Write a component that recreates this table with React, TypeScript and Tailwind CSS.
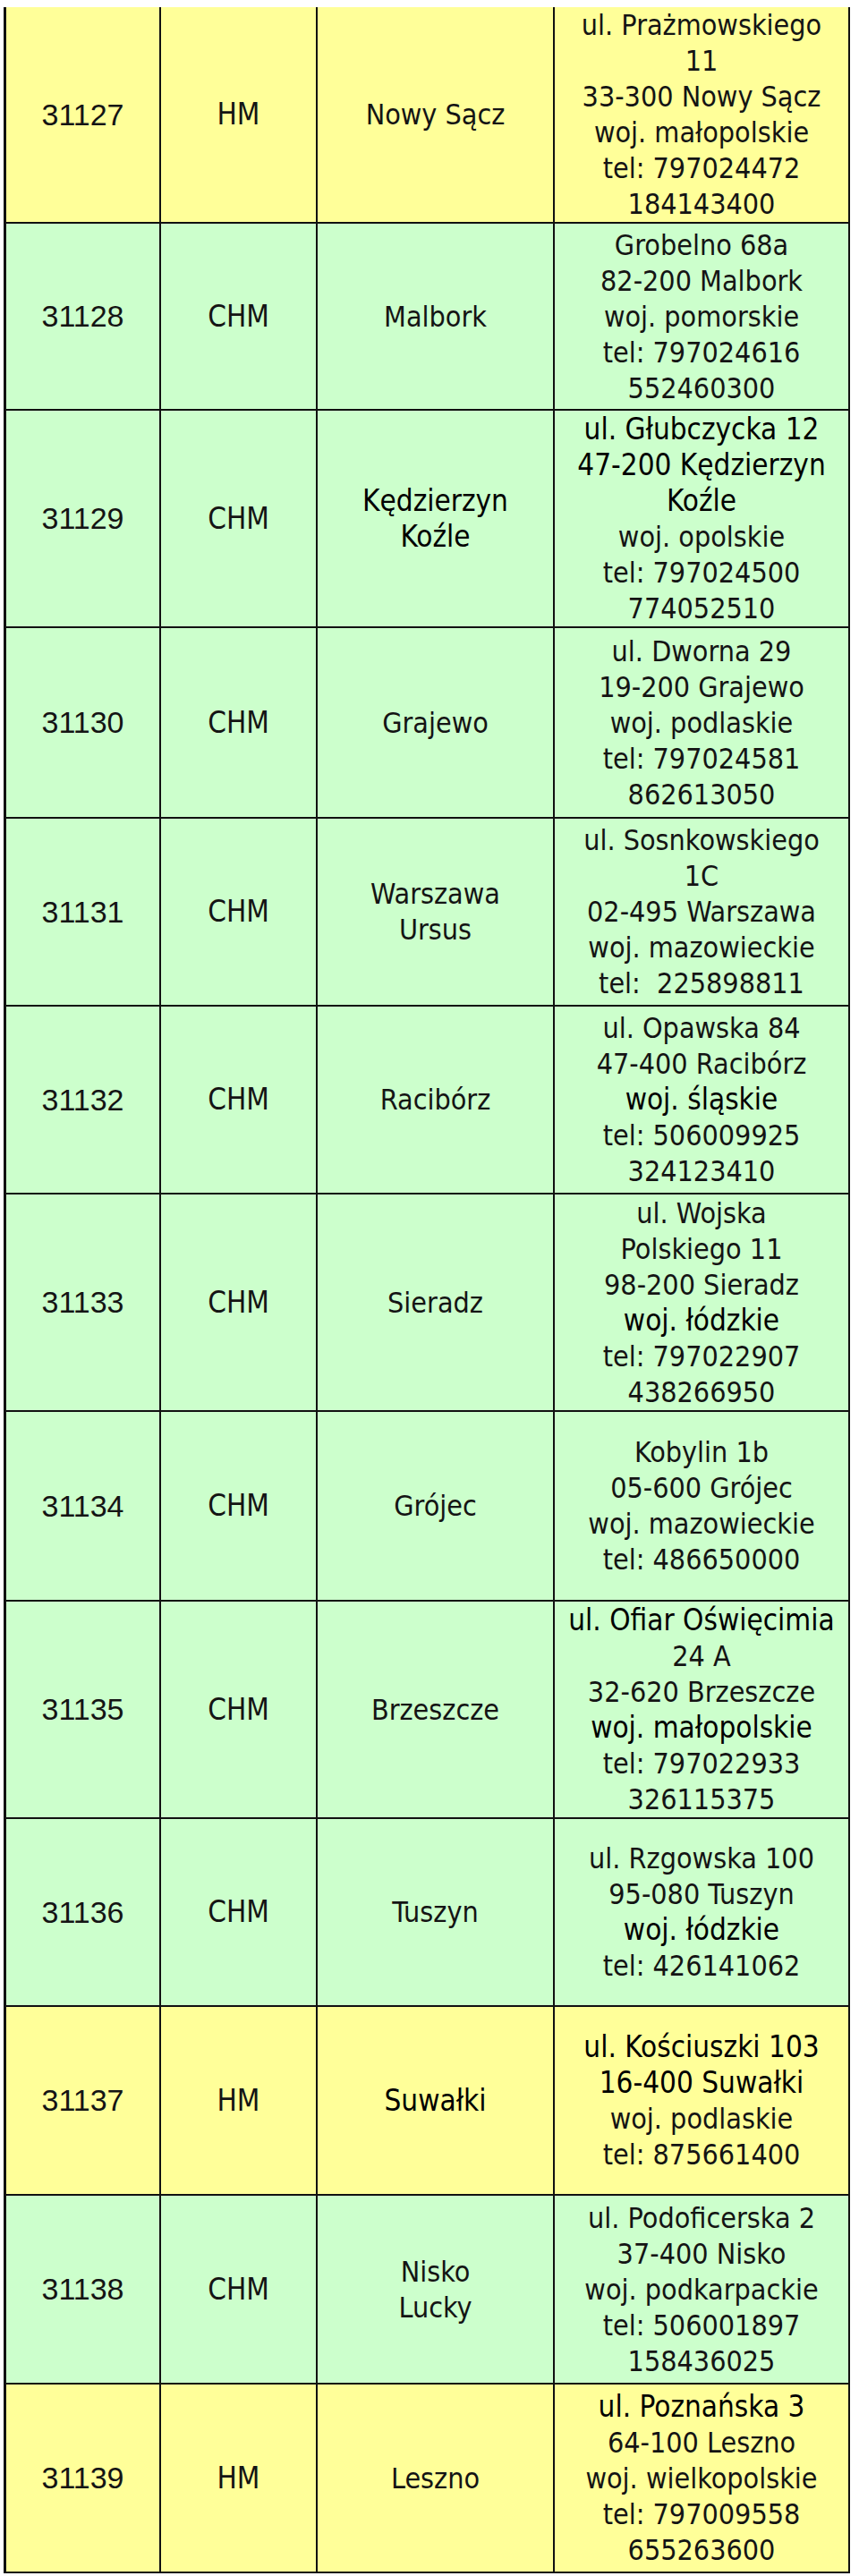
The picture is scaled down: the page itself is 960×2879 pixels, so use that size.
import React from "react";

type Line = { text: string; alt?: boolean };

type Store = {
  id: string;
  kind: string;
  city: Line[];
  address: Line[];
  tone: "yellow" | "green";
  height: string;
};

const l = (text: string, alt = false): Line => ({ text, alt });

const STORES: Store[] = [
  {
    id: "31127",
    kind: "HM",
    city: [l("Nowy Sącz")],
    address: [
      l("ul. Prażmowskiego"),
      l("11"),
      l("33-300 Nowy Sącz"),
      l("woj. małopolskie"),
      l("tel: 797024472"),
      l("184143400"),
    ],
    tone: "yellow",
    height: "h-[242px]",
  },
  {
    id: "31128",
    kind: "CHM",
    city: [l("Malbork")],
    address: [
      l("Grobelno 68a"),
      l("82-200 Malbork"),
      l("woj. pomorskie"),
      l("tel: 797024616"),
      l("552460300"),
    ],
    tone: "green",
    height: "h-[209px]",
  },
  {
    id: "31129",
    kind: "CHM",
    city: [l("Kędzierzyn", true), l("Koźle", true)],
    address: [
      l("ul. Głubczycka 12", true),
      l("47-200 Kędzierzyn", true),
      l("Koźle", true),
      l("woj. opolskie"),
      l("tel: 797024500"),
      l("774052510"),
    ],
    tone: "green",
    height: "h-[243px]",
  },
  {
    id: "31130",
    kind: "CHM",
    city: [l("Grajewo")],
    address: [
      l("ul. Dworna 29"),
      l("19-200 Grajewo"),
      l("woj. podlaskie"),
      l("tel: 797024581"),
      l("862613050"),
    ],
    tone: "green",
    height: "h-[213px]",
  },
  {
    id: "31131",
    kind: "CHM",
    city: [l("Warszawa"), l("Ursus")],
    address: [
      l("ul. Sosnkowskiego"),
      l("1C"),
      l("02-495 Warszawa"),
      l("woj. mazowieckie"),
      l("tel:  225898811"),
    ],
    tone: "green",
    height: "h-[210px]",
  },
  {
    id: "31132",
    kind: "CHM",
    city: [l("Racibórz")],
    address: [
      l("ul. Opawska 84"),
      l("47-400 Racibórz"),
      l("woj. śląskie", true),
      l("tel: 506009925"),
      l("324123410"),
    ],
    tone: "green",
    height: "h-[210px]",
  },
  {
    id: "31133",
    kind: "CHM",
    city: [l("Sieradz")],
    address: [
      l("ul. Wojska"),
      l("Polskiego 11"),
      l("98-200 Sieradz"),
      l("woj. łódzkie", true),
      l("tel: 797022907"),
      l("438266950"),
    ],
    tone: "green",
    height: "h-[243px]",
  },
  {
    id: "31134",
    kind: "CHM",
    city: [l("Grójec")],
    address: [
      l("Kobylin 1b"),
      l("05-600 Grójec"),
      l("woj. mazowieckie"),
      l("tel: 486650000"),
    ],
    tone: "green",
    height: "h-[212px]",
  },
  {
    id: "31135",
    kind: "CHM",
    city: [l("Brzeszcze")],
    address: [
      l("ul. Ofiar Oświęcimia", true),
      l("24 A"),
      l("32-620 Brzeszcze"),
      l("woj. małopolskie", true),
      l("tel: 797022933"),
      l("326115375"),
    ],
    tone: "green",
    height: "h-[243px]",
  },
  {
    id: "31136",
    kind: "CHM",
    city: [l("Tuszyn")],
    address: [
      l("ul. Rzgowska 100"),
      l("95-080 Tuszyn"),
      l("woj. łódzkie", true),
      l("tel: 426141062"),
    ],
    tone: "green",
    height: "h-[210px]",
  },
  {
    id: "31137",
    kind: "HM",
    city: [l("Suwałki", true)],
    address: [
      l("ul. Kościuszki 103", true),
      l("16-400 Suwałki", true),
      l("woj. podlaskie"),
      l("tel: 875661400"),
    ],
    tone: "yellow",
    height: "h-[211px]",
  },
  {
    id: "31138",
    kind: "CHM",
    city: [l("Nisko"), l("Lucky")],
    address: [
      l("ul. Podoficerska 2"),
      l("37-400 Nisko"),
      l("woj. podkarpackie"),
      l("tel: 506001897"),
      l("158436025"),
    ],
    tone: "green",
    height: "h-[211px]",
  },
  {
    id: "31139",
    kind: "HM",
    city: [l("Leszno")],
    address: [
      l("ul. Poznańska 3", true),
      l("64-100 Leszno"),
      l("woj. wielkopolskie"),
      l("tel: 797009558"),
      l("655263600"),
    ],
    tone: "yellow",
    height: "h-[211px]",
  },
];

const CELL =
  "flex flex-col items-center justify-center text-center border-r-2 border-[#111]";

function Lines({ lines }: { lines: Line[] }) {
  return (
    <>
      {lines.map((ln, i) => (
        <span
          key={i}
          className={
            ln.alt
              ? "block whitespace-pre text-[33px] leading-[40px] text-black"
              : "block whitespace-pre text-[32px] leading-[40px]"
          }
        >
          {ln.text}
        </span>
      ))}
    </>
  );
}

function StoreRow({ store }: { store: Store }) {
  const bg = store.tone === "yellow" ? "bg-[#ffff99]" : "bg-[#ccffcc]";
  return (
    <div
      className={`grid grid-cols-[173px_175px_265px_328px] border-b-2 border-[#111] ${bg} ${store.height}`}
    >
      <div className={`${CELL} font-['Liberation_Sans',Arial,sans-serif] text-[34px]`}>
        {store.id}
      </div>
      <div className={`${CELL} text-[33px]`}>{store.kind}</div>
      <div className={CELL}>
        <Lines lines={store.city} />
      </div>
      <div className="flex flex-col items-center justify-center text-center">
        <Lines lines={store.address} />
      </div>
    </div>
  );
}

export default function App() {
  return (
    <div className="w-[960px] min-h-[2879px] bg-white pt-[8px] font-['DejaVu_Sans_Condensed','DejaVu_Sans',sans-serif] text-[#141414]">
      <div className="ml-[4px] w-[946px] border-l-[3px] border-r-2 border-[#111]">
        {STORES.map((s) => (
          <StoreRow key={s.id} store={s} />
        ))}
      </div>
    </div>
  );
}
